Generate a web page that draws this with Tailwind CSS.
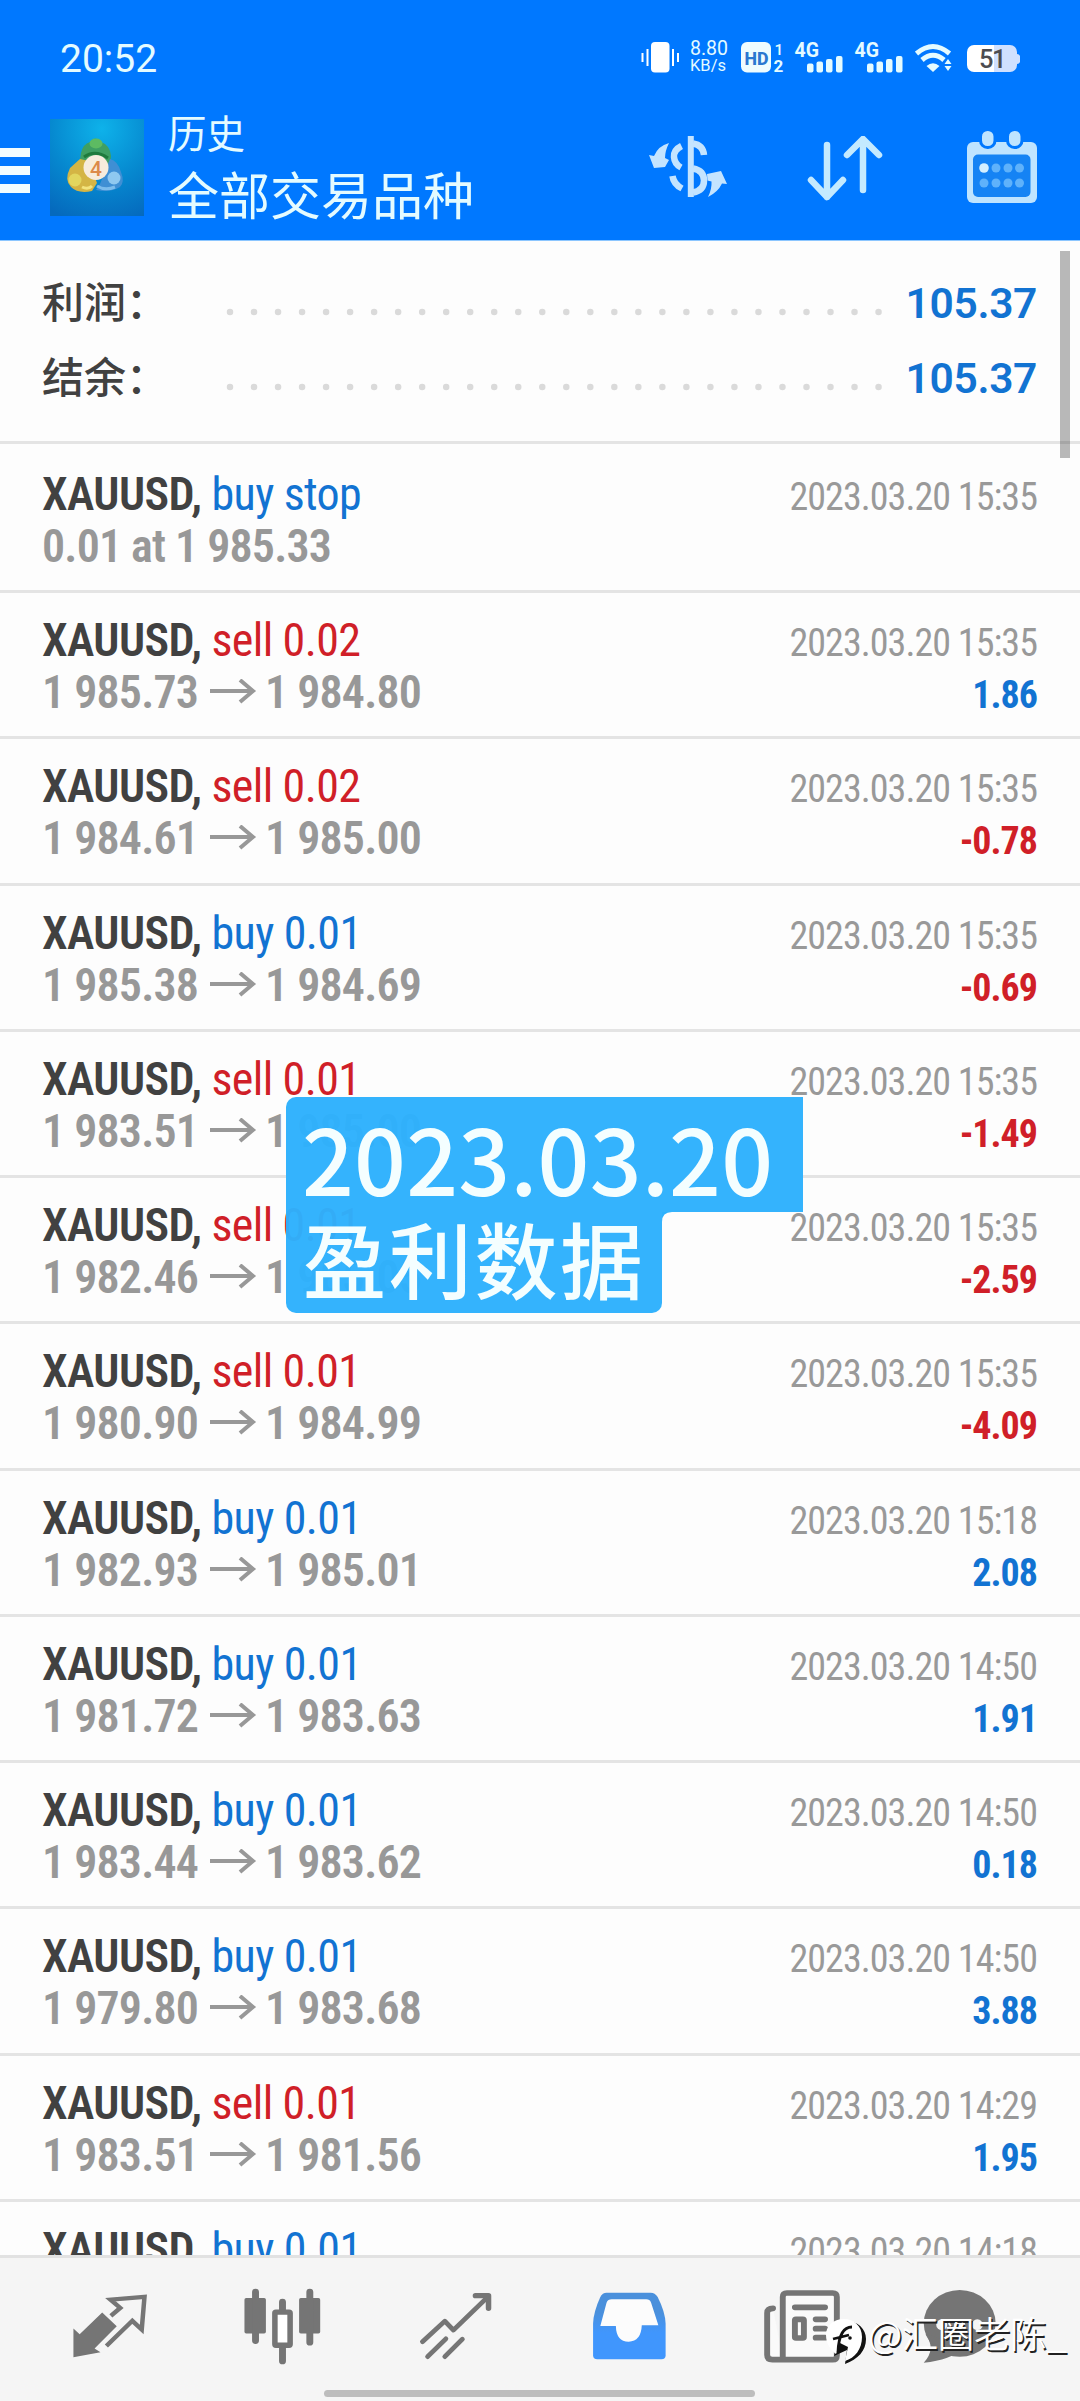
<!DOCTYPE html>
<html lang="zh-CN">
<head>
<meta charset="utf-8">
<title>历史</title>
<script src="https://cdn.jsdelivr.net/npm/@tailwindcss/browser@4"></script>
</head>
<body class="bg-white">
<div class="relative flex h-[2401px] w-[1080px] flex-col overflow-hidden bg-[#fdfdfd] font-['Roboto','Noto_Sans_CJK_SC',sans-serif]">

  <header class="flex h-[241px] shrink-0 flex-col border-b border-[#8cc6ff] bg-[#0078ff] text-[#e4fbff]">
    <!-- status bar -->
    <div class="flex h-[102px] items-start justify-between pt-[42px] pr-[60px] pl-[60px]">
      <div class="text-[39px] leading-[35px]">20:52</div>
      <div class="flex h-[31px] items-start">
        <svg class="mr-[11px] h-[31px] w-[38px]" viewBox="641 42 38 31" fill="#fff"><rect x="651" y="42" width="18.500" height="30.500" rx="4"/><path d="M647.500 49v17M673 49v17M642.500 53v9M678 53v9" stroke="#fff" stroke-width="2"/></svg>
        <div class="mr-3 flex h-[31px] w-[39px] flex-col text-[19.5px] leading-[16px] whitespace-nowrap"><span class="-mt-px">8.80</span><span class="text-[16.5px] leading-[17px]">KB/s</span></div>
        <svg class="mr-[11px] h-[31px] w-[43px] overflow-visible" viewBox="741 42 43 31"><rect x="741" y="42" width="30" height="30.500" rx="6" fill="#eefcff"/><text x="744.500" y="64.500" font-family="Roboto" font-size="19" font-weight="800" fill="#2a78d0" textLength="24" lengthAdjust="spacingAndGlyphs">HD</text><text x="774.500" y="54.500" font-family="Roboto" font-size="15.500" font-weight="500" fill="#e4fbff">1</text><text x="773.500" y="72" font-family="Roboto" font-size="17" font-weight="700" fill="#e4fbff">2</text></svg>
        <svg class="mr-[11px] h-[31px] w-[49px] overflow-visible" viewBox="795 42 49 31" fill="#e4fbff"><text x="794.500" y="57" font-family="Roboto" font-size="19.500" font-weight="700" textLength="24.500" lengthAdjust="spacingAndGlyphs">4G</text><rect x="807" y="63.500" width="6.500" height="9" rx="2"/><rect x="816.500" y="61.500" width="6.500" height="11" rx="2"/><rect x="826" y="59" width="6.500" height="13.500" rx="2"/><rect x="836" y="56" width="6.500" height="16.500" rx="2"/></svg>
        <svg class="mr-[11px] h-[31px] w-[49px] overflow-visible" viewBox="795 42 49 31" fill="#e4fbff"><text x="794.500" y="57" font-family="Roboto" font-size="19.500" font-weight="700" textLength="24.500" lengthAdjust="spacingAndGlyphs">4G</text><rect x="807" y="63.500" width="6.500" height="9" rx="2"/><rect x="816.500" y="61.500" width="6.500" height="11" rx="2"/><rect x="826" y="59" width="6.500" height="13.500" rx="2"/><rect x="836" y="56" width="6.500" height="16.500" rx="2"/></svg>
        <svg class="mr-[13px] h-[31px] w-[38px]" viewBox="915 42 38 31" fill="none" stroke="#e4fbff"><path d="M916.500 53.500Q933 39.500 949.500 53.500" stroke-width="5"/><path d="M922 60Q933 50.500 944 60" stroke-width="5"/><path d="M926.500 66Q933 60.500 939.500 66L933 72z" fill="#e4fbff" stroke="none"/><path d="M948 59l3.500 5h-7zM948 71l-3.500-5h7z" fill="#e4fbff" stroke="none"/></svg>
        <svg class="mt-[2px] h-[30px] w-[54px]" viewBox="965 44 54 30"><defs><linearGradient id="bat"><stop offset=".54" stop-color="#fff"/><stop offset=".54" stop-color="#cfe0ff"/></linearGradient></defs><rect x="966" y="45" width="50" height="27" rx="7" fill="url(#bat)"/><path d="M1016 54q3.500 0 3.500 5t-3.500 5z" fill="#cfe0ff"/><text x="978" y="68" font-family="Roboto" font-size="25.500" font-weight="500" fill="#4c4c50" textLength="27.500">51</text></svg>
      </div>
    </div>
    <!-- title bar -->
    <div class="flex flex-1 items-start pr-[42px]">
      <div class="mt-[46px] flex w-[30px] flex-col gap-[9px]"><i class="h-[9px] bg-[#f2fdff]"></i><i class="h-[9px] bg-[#f2fdff]"></i><i class="h-[9px] bg-[#f2fdff]"></i></div>
      <svg class="mt-[17px] ml-5 h-[97px] w-[94px]" viewBox="50 119 94 97">
        <defs><radialGradient id="lg" cx=".55" cy=".1" r="1"><stop offset="0" stop-color="#0eb2ea"/><stop offset=".55" stop-color="#0688cf"/><stop offset="1" stop-color="#0569bd"/></radialGradient></defs>
        <rect x="50" y="119" width="94" height="97" fill="url(#lg)"/>
        <path d="M81 153q2-9 9-11 5-7 11 0 9 3 10 14l-1 10H79z" fill="#3f9f62"/><ellipse cx="96" cy="143.500" rx="6.500" ry="5" fill="#5dbb62"/><path d="M84 157q11-8 24 1" stroke="#1f7a3c" stroke-width="3" fill="none"/>
        <path d="M70 168l10-9 9 2 8 22-5 8q-14 3-21-4-7-7-1-19z" fill="#d4b544"/><circle cx="75" cy="180" r="6.500" fill="#e2d65e"/><path d="M82 187q6 3 10-1" stroke="#f3e37c" stroke-width="3" fill="none"/>
        <path d="M100 184l10-25q8 2 11 13 4 10-1 15-10 6-24 3z" fill="#3f8fd4"/><circle cx="114" cy="178" r="6.500" fill="#8fc8f0"/><path d="M97 186q8 5 18 1" stroke="#7cbcec" stroke-width="3" fill="none"/>
        <circle cx="96" cy="167.500" r="12.500" fill="#f7ecdc"/><text x="96" y="175.500" text-anchor="middle" font-family="Roboto" font-size="21" font-weight="500" fill="#dc8a4a">4</text>
      </svg>
      <div class="mt-[8px] ml-[24px] flex flex-col">
        <div class="h-[50px] text-[38.5px] leading-[50px]">历史</div>
        <div class="h-[74px] text-[51px] leading-[75px]">全部交易品种</div>
      </div>
      <svg class="mt-[34px] ml-auto h-[62px] w-[80px]" viewBox="650 136 80 62" fill="none" stroke="#c4e4ff" stroke-width="6.500"><path d="M692.800 136v61" stroke-width="6"/><path d="M683.500 146q-8 4-7.500 11t7 10.500M674.500 176q1 8 9.500 12.500M695 143.500q10 1.500 11 11.500M695 168.500q11 2 11 12t-11 12" /><path d="M651 155l5 1Q660 146 671 143q-4 8-4 15l4 2-4 7-11 1zM709 174l14-3 6 13-5-.500Q720 192 710 197q4-8 3.500-15.500l-4-1z" fill="#c4e4ff" stroke="none"/></svg>
      <svg class="mt-[34px] ml-[79px] h-[66px] w-[76px]" viewBox="808 136 76 66" fill="none" stroke="#c4eaff" stroke-width="6.500" stroke-linecap="round" stroke-linejoin="round"><path d="M828 145v52M812 180l16 17 16-17M864 190v-50M848 155l16-16 16 16"/></svg>
      <svg class="mt-[28px] ml-[83px] h-[74px] w-[72px]" viewBox="967 130 72 74"><rect x="968" y="142" width="70" height="61" rx="6" fill="#bfe4ff"/><rect x="974" y="154.500" width="57.500" height="42.500" rx="5" fill="#1583f4"/><g fill="#bfe4ff" stroke="#0078ff" stroke-width="3"><rect x="981.500" y="129.500" width="14.500" height="18" rx="7"/><rect x="1008.500" y="129.500" width="14.500" height="18" rx="7"/></g><g fill="#5fb2fb"><circle cx="985" cy="168" r="4.800" fill="#d3efff"/><circle cx="997" cy="168" r="4.500"/><circle cx="1009" cy="168" r="4.500"/><circle cx="1020.500" cy="168" r="4.500"/><circle cx="985" cy="183" r="4.500"/><circle cx="997" cy="183" r="4.500"/><circle cx="1009" cy="183" r="4.500"/><circle cx="1020.500" cy="183" r="4.500"/></g></svg>
    </div>
  </header>

  <main class="flex min-h-0 flex-1 flex-col overflow-hidden">
    <section class="flex h-[203px] shrink-0 flex-col border-b-[3px] border-[#e4e4e4] pt-[25px] pr-[43px] pl-[42px]">
      <div class="flex h-[75px] items-center">
        <span class="w-[184px] text-[42px] font-medium text-[#414141]">利润：</span>
        <svg class="mt-[17px] h-[8px] w-[660px] shrink-0" viewBox="0 0 660 8"><path d="M4 4h650" stroke="#dadada" stroke-width="6.500" stroke-linecap="round" stroke-dasharray="0 24.020"/></svg>
        <span class="ml-auto text-[42.5px] font-semibold tracking-[-.35px] text-[#1273d2]">105.37</span>
      </div>
      <div class="flex h-[75px] items-center">
        <span class="w-[184px] text-[42px] font-medium text-[#414141]">结余：</span>
        <svg class="mt-[17px] h-[8px] w-[660px] shrink-0" viewBox="0 0 660 8"><path d="M4 4h650" stroke="#dadada" stroke-width="6.500" stroke-linecap="round" stroke-dasharray="0 24.020"/></svg>
        <span class="ml-auto text-[42.5px] font-semibold tracking-[-.35px] text-[#1273d2]">105.37</span>
      </div>
    </section>
    <div id="list" class="flex flex-col font-stretch-75%"></div>
  </main>

  <nav class="flex h-[146px] shrink-0 flex-col border-t-[3px] border-[#e2e2e2] bg-[#f5f5f5]">
    <div class="grid h-[136px] grid-cols-[173px_173px_173px_173px_173px_141px] items-center justify-items-center pl-[23px]">
      <svg class="h-[68px] w-[78px]" viewBox="210 340 225 205" preserveAspectRatio="none" fill="#757575"><path d="M217 450l18 17 65-65 42 41-64 67 17 12-78 15z"/><path d="M325 412l27-24-28-25 98-8-8 98-27-26-75 76" fill="none" stroke="#757575" stroke-width="13"/></svg>
      <svg class="h-[77px] w-[83px]" viewBox="700 325 240 230" preserveAspectRatio="none" fill="#757575"><rect x="710" y="355" width="62" height="106" rx="5"/><rect x="868" y="355" width="61" height="106" rx="5"/><path d="M742 337v145M899 337v150M820 367v25M820 505v38" stroke="#757575" stroke-width="20" stroke-linecap="round"/><rect x="798" y="397" width="44" height="99" rx="3" fill="#fff" stroke="#757575" stroke-width="16"/></svg>
      <svg class="h-[68px] w-[74px]" viewBox="1215 335 215 205" preserveAspectRatio="none" fill="none" stroke="#757575" stroke-width="14" stroke-linecap="round" stroke-linejoin="round"><path d="M1225 485l65-62 25 27 100-100M1240 530l53-54M1290 530l51-53"/><path d="M1379 346h38v38" stroke-width="16"/></svg>
      <svg class="h-[70px] w-[76px]" viewBox="145 332 220 210" preserveAspectRatio="none"><defs><linearGradient id="in" x2="0" y2="1"><stop offset=".3" stop-color="#4a90dc"/><stop offset=".6" stop-color="#4096fd"/></linearGradient></defs><path d="M190 337H318Q330 337 338 350 360 395 361 430V525Q361 537 349 537H163Q151 537 151 525V430Q152 395 172 350 178 337 190 337z" fill="url(#in)"/><path d="M205 357H305Q315 357 319 367L340 435H292Q290 484 254 484T217 437H172L190 367Q194 357 205 357z" fill="#fcfcfc"/></svg>
      <svg class="h-[75px] w-[78px]" viewBox="645 325 225 225" preserveAspectRatio="none" fill="#fafafa" stroke="#757575" stroke-width="17" stroke-linecap="round"><path d="M674 383Q657 383 657 397V523Q657 537 672 537H846Q858 537 858 525V349Q858 337 846 337H714Q702 337 702 349V537"/><path d="M737 380h87M797 416h27M797 444h27M797 471h27"/><rect x="737" y="416" width="26" height="56" rx="3"/></svg>
      <svg class="h-[75px] w-[76px]" viewBox="1105 325 220 225" preserveAspectRatio="none" fill="#757575"><ellipse cx="1217" cy="428" rx="104" ry="100"/><path d="M1118 460Q1150 505 1113 546 1190 540 1230 500z"/><circle cx="1165" cy="432" r="16" fill="#f5f5f5"/><circle cx="1217" cy="432" r="16" fill="#f5f5f5"/><circle cx="1268" cy="432" r="16" fill="#f5f5f5"/></svg>
    </div>
    <div class="-mt-[4px] ml-[324px] h-[7px] w-[431px] rounded-full bg-[#bdbdbd]"></div>
  </nav>

  <!-- scrollbar -->
  <div class="absolute top-[251px] left-[1060px] h-[207px] w-[10px] bg-black/27"></div>
  <!-- caption -->
  <div class="absolute top-[1097px] left-[286px] flex flex-col items-start font-['Noto_Sans_CJK_SC',sans-serif] font-medium whitespace-nowrap text-[#f4feff]">
    <div class="h-[115px] w-[517px] rounded-tl-[10px] bg-[#2db1fd]/97 pl-[16px] text-[91px] leading-[119px] tracking-[.2px]">2023.03.20</div>
    <div class="relative h-[101px] w-[376px] rounded-b-[10px] bg-[#2db1fd]/97 pl-[17px] text-[83px] leading-[90px] tracking-[2.7px]">盈利数据
      <svg class="absolute top-0 left-[376px] h-[10px] w-[10px]" viewBox="0 0 10 10"><path d="M0 0h10Q0 0 0 10z" fill="#2db1fd"/></svg>
    </div>
  </div>
  <!-- watermark -->
  <div class="absolute top-[2306px] left-[825px] flex items-start whitespace-nowrap">
    <svg class="mt-[11px] h-[48px] w-[43px]" viewBox="826 2317 43 48"><path d="M847 2321c12 0 20 8 20 18 0 12-8 20-21 25l2-14-13 6z" fill="#111"/><path d="M845 2319c-11 0-18 7-18 16 0 9 5 15 10 19l4-11 8 4-3 14c10-3 17-12 17-24 0-11-8-18-18-18z" fill="#fff"/><path d="M834 2339l16-4M839 2352q1-25 14-25" fill="none" stroke="#111" stroke-width="2.800"/><circle cx="851" cy="2338" r="1.800" fill="#111"/></svg>
    <span class="font-['Noto_Sans_CJK_SC',sans-serif] text-[36.5px] leading-[54px] font-[350] tracking-[-.4px] text-white [text-shadow:1.5px_1.5px_0_#222]">@汇圈老陈_</span>
  </div>
</div>

<script>
const rows = [
  ['buy stop', '0.01 at 1 985.33', null, '15:35', ''],
  ['sell 0.02', '1 985.73', '1 984.80', '15:35', '1.86'],
  ['sell 0.02', '1 984.61', '1 985.00', '15:35', '-0.78'],
  ['buy 0.01', '1 985.38', '1 984.69', '15:35', '-0.69'],
  ['sell 0.01', '1 983.51', '1 985.00', '15:35', '-1.49'],
  ['sell 0.01', '1 982.46', '1 985.05', '15:35', '-2.59'],
  ['sell 0.01', '1 980.90', '1 984.99', '15:35', '-4.09'],
  ['buy 0.01', '1 982.93', '1 985.01', '15:18', '2.08'],
  ['buy 0.01', '1 981.72', '1 983.63', '14:50', '1.91'],
  ['buy 0.01', '1 983.44', '1 983.62', '14:50', '0.18'],
  ['buy 0.01', '1 979.80', '1 983.68', '14:50', '3.88'],
  ['sell 0.01', '1 983.51', '1 981.56', '14:29', '1.95'],
  ['buy 0.01', '', null, '14:18', ''],
];
const arrow = '<svg class="mr-[8px] ml-[10px] h-[26px] w-[48px]" viewBox="0 0 48 26" fill="none" stroke="#989898" stroke-width="4"><path d="M1 12h43M31 1l13 11-13 11"/></svg>';
document.getElementById('list').innerHTML = rows.map(([side, from, to, time, profit], i) => `
  <div class="${i ? 'h-[146.27px] pt-[21px]' : 'h-[149px] pt-[24px]'} shrink-0 border-b-[3px] border-[#e4e4e4] pr-[43px] pl-[42px] whitespace-nowrap">
    <div class="flex h-[52px] items-baseline justify-between leading-[52px]">
      <div class="text-[46px] tracking-[-.6px]"><span class="font-semibold text-[#414141]">XAUUSD,</span> <span class="${side.startsWith('buy') ? 'text-[#1273d2]' : 'text-[#d01f28]'}">${side}</span></div>
      <div class="text-[38px] tracking-[-.95px] text-[#999]">2023.03.20 ${time}</div>
    </div>
    <div class="flex h-[52px] items-baseline justify-between leading-[52px]">
      <div class="flex items-center text-[46px] font-semibold tracking-[-.8px] text-[#989898]"><span class="${to ? 'w-[157px]' : ''}">${from}</span>${to ? arrow + '<span>' + to + '</span>' : ''}</div>
      <div class="text-[38px] font-bold tracking-[-1px] ${profit.startsWith('-') ? 'text-[#d01f28]' : 'text-[#1273d2]'}">${profit}</div>
    </div>
  </div>`).join('');
</script>
</body>
</html>
